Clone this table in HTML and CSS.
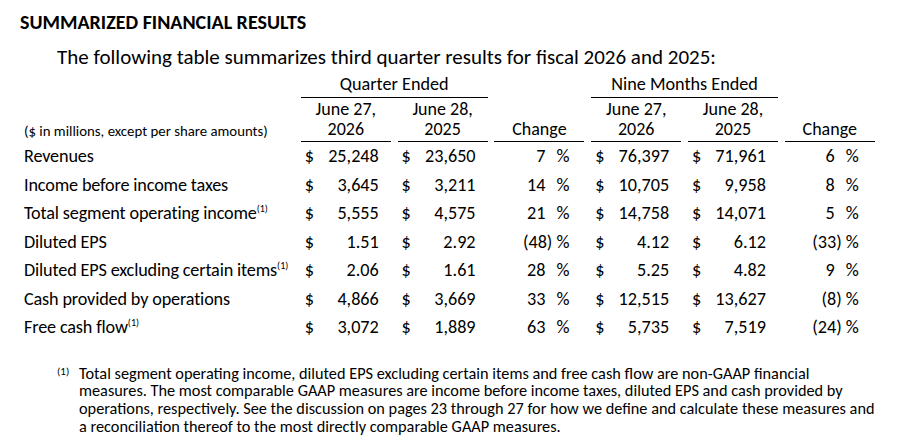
FILE: index.html
```
<!DOCTYPE html>
<html lang="en">
<head>
<meta charset="utf-8">
<title>Summarized Financial Results</title>
<link rel="stylesheet" href="styles.css">
</head>
<body>
<div class="page">
  <h1 class="title">SUMMARIZED FINANCIAL RESULTS</h1>
  <p class="intro">The following table summarizes third quarter results for fiscal 2026 and 2025:</p>

  <div class="fin">
    <div class="h-blank"></div>
    <div class="h-group span2">Quarter Ended</div>
    <div class="h-blank"></div>
    <div class="h-group span2">Nine Months Ended</div>
    <div class="h-blank"></div>

    <div class="h-unit">($ in millions, except per share amounts)</div>
    <div class="h-col">June 27,<br>2026</div>
    <div class="h-col">June 28,<br>2025</div>
    <div class="h-col">Change</div>
    <div class="h-col">June 27,<br>2026</div>
    <div class="h-col">June 28,<br>2025</div>
    <div class="h-col">Change</div>

    <div class="lbl">Revenues</div>
    <div class="amt"><span>$</span><span>25,248</span></div>
    <div class="amt"><span>$</span><span>23,650</span></div>
    <div class="pct pct-q"><span class="pos">7</span><span class="pc">%</span></div>
    <div class="amt"><span>$</span><span>76,397</span></div>
    <div class="amt"><span>$</span><span>71,961</span></div>
    <div class="pct pct-n"><span class="pos">6</span><span class="pc">%</span></div>

    <div class="lbl">Income before income taxes</div>
    <div class="amt"><span>$</span><span>3,645</span></div>
    <div class="amt"><span>$</span><span>3,211</span></div>
    <div class="pct pct-q"><span class="pos">14</span><span class="pc">%</span></div>
    <div class="amt"><span>$</span><span>10,705</span></div>
    <div class="amt"><span>$</span><span>9,958</span></div>
    <div class="pct pct-n"><span class="pos">8</span><span class="pc">%</span></div>

    <div class="lbl">Total segment operating income<sup>(1)</sup></div>
    <div class="amt"><span>$</span><span>5,555</span></div>
    <div class="amt"><span>$</span><span>4,575</span></div>
    <div class="pct pct-q"><span class="pos">21</span><span class="pc">%</span></div>
    <div class="amt"><span>$</span><span>14,758</span></div>
    <div class="amt"><span>$</span><span>14,071</span></div>
    <div class="pct pct-n"><span class="pos">5</span><span class="pc">%</span></div>

    <div class="lbl">Diluted EPS</div>
    <div class="amt"><span>$</span><span>1.51</span></div>
    <div class="amt"><span>$</span><span>2.92</span></div>
    <div class="pct pct-q"><span>(48)</span><span class="pc">%</span></div>
    <div class="amt"><span>$</span><span>4.12</span></div>
    <div class="amt"><span>$</span><span>6.12</span></div>
    <div class="pct pct-n"><span>(33)</span><span class="pc">%</span></div>

    <div class="lbl">Diluted EPS excluding certain items<sup>(1)</sup></div>
    <div class="amt"><span>$</span><span>2.06</span></div>
    <div class="amt"><span>$</span><span>1.61</span></div>
    <div class="pct pct-q"><span class="pos">28</span><span class="pc">%</span></div>
    <div class="amt"><span>$</span><span>5.25</span></div>
    <div class="amt"><span>$</span><span>4.82</span></div>
    <div class="pct pct-n"><span class="pos">9</span><span class="pc">%</span></div>

    <div class="lbl">Cash provided by operations</div>
    <div class="amt"><span>$</span><span>4,866</span></div>
    <div class="amt"><span>$</span><span>3,669</span></div>
    <div class="pct pct-q"><span class="pos">33</span><span class="pc">%</span></div>
    <div class="amt"><span>$</span><span>12,515</span></div>
    <div class="amt"><span>$</span><span>13,627</span></div>
    <div class="pct pct-n"><span>(8)</span><span class="pc">%</span></div>

    <div class="lbl">Free cash flow<sup>(1)</sup></div>
    <div class="amt"><span>$</span><span>3,072</span></div>
    <div class="amt"><span>$</span><span>1,889</span></div>
    <div class="pct pct-q"><span class="pos">63</span><span class="pc">%</span></div>
    <div class="amt"><span>$</span><span>5,735</span></div>
    <div class="amt"><span>$</span><span>7,519</span></div>
    <div class="pct pct-n"><span>(24)</span><span class="pc">%</span></div>
  </div>

  <div class="note">
    <sup class="note-mark">(1)</sup>
    <p class="note-text">Total segment operating income, diluted EPS excluding certain items and free cash flow are non-GAAP financial measures. The most comparable GAAP measures are income before income taxes, diluted EPS and cash provided by operations, respectively. See the discussion on pages 23 through 27 for how we define and calculate these measures and a reconciliation thereof to the most directly comparable GAAP measures.</p>
  </div>
</div>
</body>
</html>
```
FILE: styles.css
```
* { box-sizing: border-box; }
html, body { margin: 0; padding: 0; background: #fff; }
body {
  font-family: Carlito, Lato, "Open Sans", sans-serif;
  color: #000;
}
.page {
  width: 897px;
  height: 447px;
  padding: 11px 0 0 20px;
  overflow: hidden;
}
.title {
  margin: 0;
  font-size: 20px;
  font-weight: 700;
  line-height: 22px;
}
.intro {
  margin: 12px 0 0 37px;
  font-size: 21px;
  line-height: 24px;
}
.fin {
  margin: 2px 0 0 4px;
  display: grid;
  grid-template-columns: 270px repeat(6, 90px);
  column-gap: 6.8px;
  font-size: 18.2px;
}
.span2 { grid-column: span 2; }
.h-group {
  text-align: center;
  line-height: 20px;
  padding-top: 3px;
  padding-bottom: 3px;
  border-bottom: 1px solid #000;
}
.h-col {
  text-align: center;
  font-size: 18px;
  line-height: 20px;
  padding-top: 1px;
  padding-bottom: 2px;
  border-bottom: 1px solid #000;
  align-self: end;
}
.h-unit {
  align-self: end;
  font-size: 14.8px;
  line-height: 18px;
  padding-bottom: 2px;
  white-space: nowrap;
}
.lbl, .amt, .pct {
  height: 28.5px;
  line-height: 28.5px;
  white-space: nowrap;
}
.lbl { letter-spacing: -0.15px; }
.lbl sup {
  font-size: 10px;
  line-height: 0;
  vertical-align: 7px;
  letter-spacing: 0;
}
.amt {
  display: flex;
  justify-content: space-between;
  padding: 0 12px 0 4px;
}
.pct {
  display: flex;
  justify-content: flex-end;
}
.pct-q { padding-right: 15px; }
.pct-n { padding-right: 16px; }
.pct .pos { padding-right: 7px; }
.pct .pc {
  width: 17px;
  text-align: right;
}
.note {
  display: flex;
  margin: 23px 0 0 37px;
}
.note-mark {
  width: 22px;
  flex: none;
  font-size: 11px;
  line-height: 14px;
  vertical-align: baseline;
}
.note-text {
  margin: 0;
  width: 800px;
  font-size: 16.3px;
  line-height: 17.8px;
}
```
